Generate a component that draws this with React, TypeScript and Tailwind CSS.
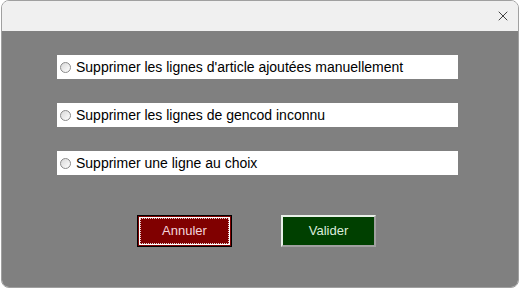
import { X } from "lucide-react";

const OPTIONS = [
  "Supprimer les lignes d'article ajoutées manuellement",
  "Supprimer les lignes de gencod inconnu",
  "Supprimer une ligne au choix",
];

function Radio() {
  return (
    <span className="w-[11px] h-[11px] rounded-full border border-[#8a8a8a] bg-gradient-to-br from-[#d8d8d8] to-white shrink-0" />
  );
}

export default function App() {
  return (
    <div className="w-[520px] h-[290px] bg-white px-[1px] pb-[2px] font-['Liberation_Sans',Arial,sans-serif]">
      <div className="w-[518px] h-[288px] rounded-lg overflow-hidden border border-[#a0a0a0] flex flex-col">
        {/* Title bar */}
        <div className="h-[30px] bg-[#f0f0f0] flex items-center justify-end pr-[7px] shrink-0">
          <X className="w-[16px] h-[16px] text-black" strokeWidth={1.1} />
        </div>

        {/* Body */}
        <div className="flex-1 bg-[#808080] flex flex-col">
          <div className="pt-[24px] pl-[55px] flex flex-col gap-[24px]">
            {OPTIONS.map((label) => (
              <label
                key={label}
                className="w-[401px] h-[24px] bg-white flex items-center gap-[5px] pl-[3px] text-[14px] text-black"
              >
                <Radio />
                {label}
              </label>
            ))}
          </div>

          <div className="flex pl-[135px] gap-[49px] mt-[40px]">
            <button className="w-[95px] h-[32px] border border-black bg-[#800000] p-[1px]">
              <span className="w-full h-full border border-white flex items-center justify-center">
                <span className="w-full h-full border border-dotted border-white/80 flex items-center justify-center text-[13px] text-[#f4d4dc]">
                  Annuler
                </span>
              </span>
            </button>
            <button className="w-[95px] h-[32px] bg-[#004000] border-2 border-t-[#e8f0e8] border-l-[#e8f0e8] border-r-[#a0a0a0] border-b-[#a0a0a0] text-[13px] text-[#dcecdc] flex items-center justify-center">
              Valider
            </button>
          </div>
        </div>
      </div>
    </div>
  );
}
